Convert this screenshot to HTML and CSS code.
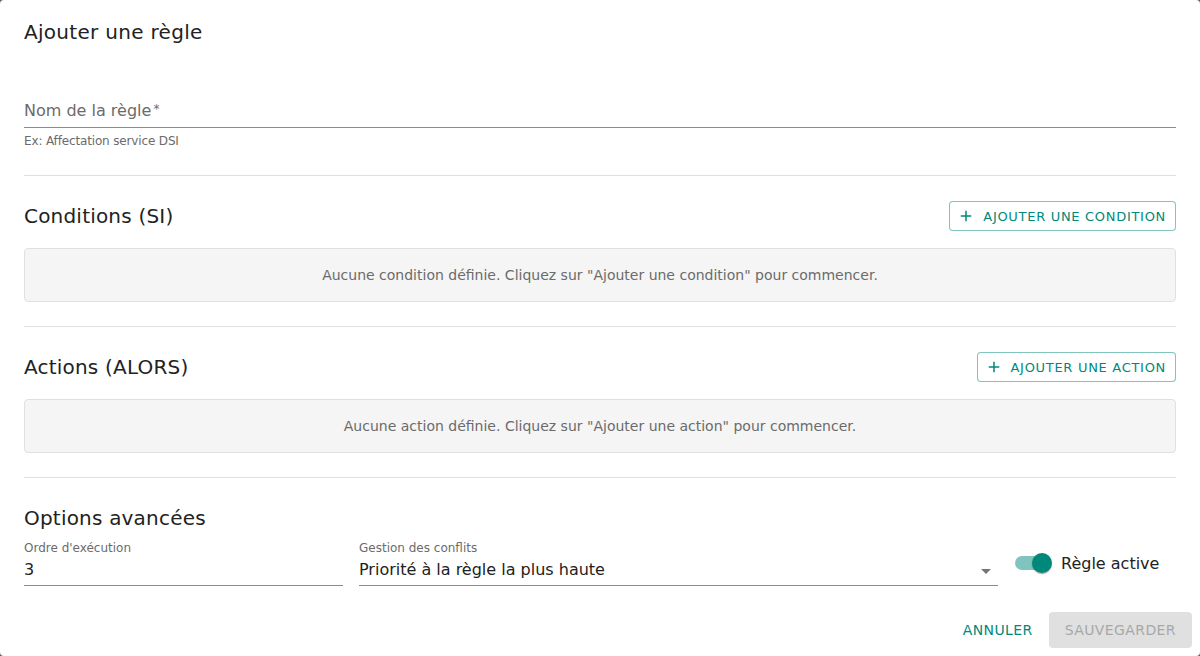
FILE: index.html
```html
<!DOCTYPE html>
<html lang="fr">
<head>
<meta charset="utf-8">
<title>Ajouter une règle</title>
<link rel="stylesheet" href="styles.css">
</head>
<body>
<div class="dialog">
  <h2 class="dialog-title">Ajouter une règle</h2>
  <div class="dialog-content">
    <div class="name-field">
      <div class="name-input">Nom de la règle<span class="req">*</span></div>
      <div class="helper">Ex: Affectation service DSI</div>
    </div>

    <hr class="divider">

    <div class="section-head">
      <h3 class="section-title">Conditions (SI)</h3>
      <button class="btn-outline">
        <svg class="plus" viewBox="0 0 24 24" width="18" height="18"><path d="M19 13h-6v6h-2v-6H5v-2h6V5h2v6h6v2z"/></svg>
        Ajouter une condition
      </button>
    </div>
    <div class="empty-box">Aucune condition définie. Cliquez sur "Ajouter une condition" pour commencer.</div>

    <hr class="divider">

    <div class="section-head">
      <h3 class="section-title">Actions (ALORS)</h3>
      <button class="btn-outline">
        <svg class="plus" viewBox="0 0 24 24" width="18" height="18"><path d="M19 13h-6v6h-2v-6H5v-2h6V5h2v6h6v2z"/></svg>
        Ajouter une action
      </button>
    </div>
    <div class="empty-box">Aucune action définie. Cliquez sur "Ajouter une action" pour commencer.</div>

    <hr class="divider">

    <h3 class="section-title options-title">Options avancées</h3>
    <div class="options-row">
      <div class="field field-order">
        <div class="field-label">Ordre d'exécution</div>
        <div class="field-value">3</div>
      </div>
      <div class="field field-conflict">
        <div class="field-label">Gestion des conflits</div>
        <div class="field-value select-value">
          <span>Priorité à la règle la plus haute</span>
          <svg class="arrow" viewBox="0 0 24 24" width="24" height="24"><path d="M7 10l5 5 5-5z"/></svg>
        </div>
      </div>
      <label class="switch-wrap">
        <span class="switch">
          <span class="track"></span>
          <span class="thumb"></span>
        </span>
        <span class="switch-label">Règle active</span>
      </label>
    </div>
  </div>
  <div class="dialog-actions">
    <button class="btn-text">Annuler</button>
    <button class="btn-contained" disabled>Sauvegarder</button>
  </div>
</div>
</body>
</html>
```

FILE: styles.css
```css
* { box-sizing: border-box; }
html, body { margin: 0; padding: 0; }
body {
  background: #5f5f5f;
  font-family: "DejaVu Sans", "Open Sans", sans-serif;
  color: rgba(0,0,0,0.87);
}
.dialog {
  width: 1200px;
  height: 656px;
  background: #fff;
  border-radius: 4px;
  overflow: hidden;
  display: flex;
  flex-direction: column;
}
.dialog-title {
  margin: 0;
  padding: 16px 24px;
  font-size: 20px;
  font-weight: 400;
  line-height: 32px;
  letter-spacing: 0.3px;
  color: #222;
}
.dialog-content {
  padding: 35px 24px 18px;
}
.name-field { display: flex; flex-direction: column; }
.name-input {
  height: 29px;
  font-size: 16px;
  line-height: 24px;
  padding-bottom: 4px;
  color: #6b6b6b;
  border-bottom: 1px solid #8c8c8c;
}
.req {
  font-size: 12px;
  line-height: 12px;
  margin-left: 2px;
  vertical-align: 3px;
}
.helper {
  margin-top: 3px;
  font-size: 12px;
  line-height: 20px;
  letter-spacing: -0.15px;
  color: #6b6b6b;
}
.divider {
  margin: 24px 0 0;
  border: 0;
  border-top: 1px solid #e0e0e0;
  height: 0;
}
.section-head {
  margin-top: 25px;
  height: 30px;
  display: flex;
  align-items: center;
  justify-content: space-between;
}
.section-title {
  margin: 0;
  font-size: 20px;
  font-weight: 400;
  line-height: 30px;
  letter-spacing: 0.2px;
  color: #222;
}
.btn-outline {
  height: 30px;
  display: inline-flex;
  align-items: center;
  padding: 3px 9px 3px 7px;
  border: 1px solid rgba(0,137,123,0.5);
  border-radius: 4px;
  background: #fff;
  color: #00897b;
  font-family: inherit;
  font-size: 13px;
  font-weight: 400;
  letter-spacing: 0.7px;
  text-transform: uppercase;
}
.plus { fill: #00897b; margin-right: 8px; }
.empty-box {
  margin-top: 17px;
  height: 54px;
  display: flex;
  align-items: center;
  justify-content: center;
  background: #f5f5f5;
  border: 1px solid #e0e0e0;
  border-radius: 4px;
  font-size: 14px;
  color: #6b6b6b;
}
.options-title {
  margin-top: 24px;
  line-height: 32px;
}
.options-row {
  margin-top: 6px;
  display: flex;
  align-items: center;
}
.field { display: flex; flex-direction: column; }
.field-order { width: 319px; }
.field-conflict { width: 639px; margin-left: 16px; }
.field-label {
  font-size: 12px;
  line-height: 16px;
  color: #6b6b6b;
}
.field-value {
  margin-top: 2px;
  font-size: 16px;
  line-height: 24px;
  padding-bottom: 3px;
  border-bottom: 1px solid #8c8c8c;
  color: #222;
}
.select-value {
  display: flex;
  align-items: center;
  justify-content: space-between;
}
.arrow { fill: #757575; margin-right: 0; margin-bottom: -2px; }
.switch-wrap {
  margin-left: 5px;
  display: flex;
  align-items: center;
}
.switch {
  position: relative;
  width: 58px;
  height: 38px;
  padding: 12px;
  display: inline-block;
}
.track {
  display: block;
  width: 34px;
  height: 14px;
  border-radius: 7px;
  background: #00897b;
  opacity: 0.5;
}
.thumb {
  position: absolute;
  top: 9px;
  left: 29px;
  width: 20px;
  height: 20px;
  border-radius: 50%;
  background: #00897b;
  box-shadow: 0 2px 1px -1px rgba(0,0,0,0.2), 0 1px 1px 0 rgba(0,0,0,0.14), 0 1px 3px 0 rgba(0,0,0,0.12);
}
.switch-label {
  margin-left: 0;
  font-size: 16px;
  color: #222;
}
.dialog-actions {
  margin-top: auto;
  padding: 8px;
  display: flex;
  justify-content: flex-end;
  align-items: center;
}
.btn-text {
  height: 36px;
  padding: 6px 8px;
  border: 0;
  background: transparent;
  color: #00897b;
  font-family: inherit;
  font-size: 14px;
  letter-spacing: 0.4px;
  text-transform: uppercase;
  border-radius: 4px;
}
.btn-contained {
  margin-left: 8px;
  height: 36px;
  padding: 6px 16px;
  border: 0;
  border-radius: 4px;
  background: #e0e0e0;
  color: #a8a8a8;
  font-family: inherit;
  font-size: 14px;
  letter-spacing: 0.4px;
  text-transform: uppercase;
}
```
